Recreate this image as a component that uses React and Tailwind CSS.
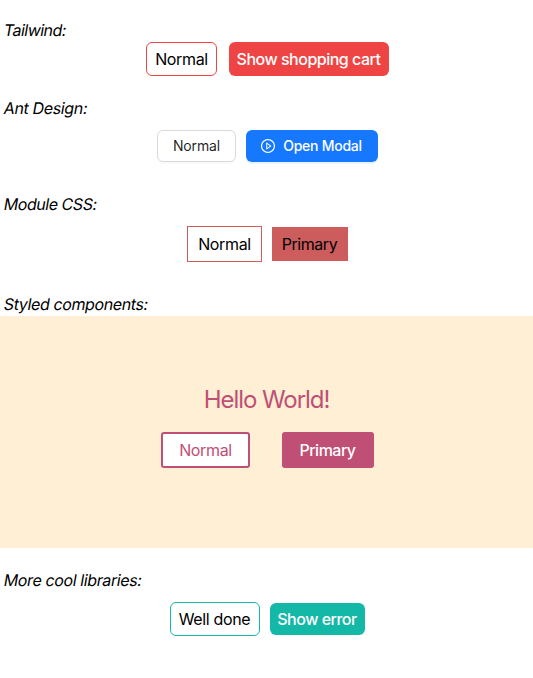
const Heading = ({ className = "", children }) => (
  <h2 className={`h-6 w-fit shrink-0 origin-[0_18px] -skew-x-[10deg] whitespace-nowrap pl-[3px] leading-6 ${className}`}>{children}</h2>
);

const Button = ({ className = "", children }) => (
  <button className={`flex shrink-0 items-center justify-center whitespace-nowrap ${className}`}>{children}</button>
);

const PlayCircle = () => (
  <svg viewBox="64 64 896 896" className="size-3.5 shrink-0" fill="currentColor" aria-hidden="true">
    <path d="M512 64C264.6 64 64 264.6 64 512s200.600 448 448 448 448-200.600 448-448S759.400 64 512 64zm0 820c-205.400 0-372-166.600-372-372s166.600-372 372-372 372 166.600 372 372-166.600 372-372 372z" />
    <path d="M719.400 499.100l-296.100-215A15.900 15.900 0 0 0 398 297v430c0 13.100 14.800 20.500 25.300 12.900l296.100-215a15.900 15.900 0 0 0 0-25.800zm-257.600 134V390.900L628.500 512 461.800 633.100z" />
  </svg>
);

export default function App() {
  return (
    <main className="flex h-[678px] w-[533px] flex-col overflow-hidden bg-white pt-[18px] font-['Inter',sans-serif] text-base tracking-[-0.35px] text-black">
      <Heading className="tracking-[-0.5px]">Tailwind:</Heading>
      <div className="flex justify-center gap-3 pl-[2px]">
        <Button className="h-[34px] w-[71px] rounded-md border border-[#ef4444]">Normal</Button>
        <Button className="h-[34px] w-[160px] rounded-md bg-[#ef4444] pr-px font-medium tracking-[-0.5px] text-white">Show shopping cart</Button>
      </div>

      <Heading className="mt-5 tracking-[-0.35px]">Ant Design:</Heading>
      <div className="mt-2.5 flex justify-center gap-2.5 pl-[2px] text-sm">
        <Button className="h-8 w-[79px] rounded-md border border-[#d9d9d9] tracking-[-0.15px] text-black/88 shadow-[0_2px_0_rgba(0,0,0,0.02)]">Normal</Button>
        <Button className="h-8 w-[132px] gap-2 rounded-md bg-[#1677ff] pr-px font-medium tracking-[-0.25px] text-white shadow-[0_2px_0_rgba(5,145,255,0.1)]">
          <PlayCircle />
          <span>Open Modal</span>
        </Button>
      </div>

      <Heading className="mt-[30px] tracking-[-0.45px]">Module CSS:</Heading>
      <div className="mt-2.5 flex items-center justify-center gap-2.5 pl-[2px]">
        <Button className="h-9 w-[75px] border border-[#cd5c5c]">Normal</Button>
        <Button className="h-[34px] w-[76px] bg-[#cd5c5c] pr-px tracking-[-0.45px]">Primary</Button>
      </div>

      <Heading className="mt-[30px] tracking-[-0.38px]">Styled components:</Heading>
      <section className="flex h-[232px] shrink-0 flex-col items-center bg-[#ffefd5] pt-[66px] text-[#bf4f74]">
        <h1 className="h-9 text-2xl leading-9 tracking-[-1.05px]">Hello World!</h1>
        <div className="mt-[14px] flex gap-8 pl-[2px]">
          <Button className="h-9 w-[89px] rounded-[3px] border-2 border-[#bf4f74] bg-white">Normal</Button>
          <Button className="h-9 w-[92px] rounded-[3px] bg-[#bf4f74] pr-px font-medium tracking-[-0.5px] text-white">Primary</Button>
        </div>
      </section>

      <Heading className="mt-5 tracking-[-0.38px]">More cool libraries:</Heading>
      <div className="mt-2.5 flex items-center justify-center gap-2.5 pl-[2px]">
        <Button className="h-[34px] w-[90px] rounded-md border border-[#14b8a6] pr-px">Well done</Button>
        <Button className="h-8 w-[95px] rounded-md bg-[#14b8a6] pr-px font-medium tracking-[-0.5px] text-white">Show error</Button>
      </div>
    </main>
  );
}
